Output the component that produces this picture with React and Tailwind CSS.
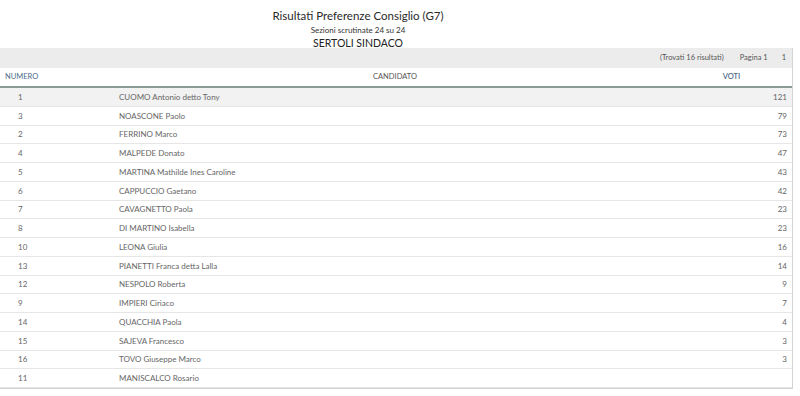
const rows = [
  ['1', 'CUOMO Antonio detto Tony', '121'],
  ['3', 'NOASCONE Paolo', '79'],
  ['2', 'FERRINO Marco', '73'],
  ['4', 'MALPEDE Donato', '47'],
  ['5', 'MARTINA Mathilde Ines Caroline', '43'],
  ['6', 'CAPPUCCIO Gaetano', '42'],
  ['7', 'CAVAGNETTO Paola', '23'],
  ['8', 'DI MARTINO Isabella', '23'],
  ['10', 'LEONA Giulia', '16'],
  ['13', 'PIANETTI Franca detta Lalla', '14'],
  ['12', 'NESPOLO Roberta', '9'],
  ['9', 'IMPIERI Ciriaco', '7'],
  ['14', 'QUACCHIA Paola', '4'],
  ['15', 'SAJEVA Francesco', '3'],
  ['16', 'TOVO Giuseppe Marco', '3'],
  ['11', 'MANISCALCO Rosario', ''],
]

export default function App() {
  return (
    <div className="w-[800px] h-[396px] bg-white overflow-hidden font-['Lato',sans-serif] text-[#333]">
      {/* intestazione */}
      <div className="flex flex-col items-center pt-[8px] w-[716px]">
        <div className="text-[11.5px] leading-[16px] text-[#2a2a2a]">Risultati Preferenze Consiglio (G7)</div>
        <div className="text-[8px] leading-[12px] text-[#333]">Sezioni scrutinate 24 su 24</div>
        <div className="text-[10.5px] leading-[14px] text-[#222]">SERTOLI SINDACO</div>
      </div>

      <div className="w-[793px] mt-[-2px] border-r border-b border-[#d4d4d4]">
        <div className="h-[20px] bg-[#ececec] flex items-center justify-end gap-[16px] pr-[6px] text-[7.5px] text-[#555]">
          <span>(Trovati 16 risultati)</span>
          <span className="flex gap-[14px]"><span>Pagina 1</span><span>1</span></span>
        </div>

        <div className="h-[20px] flex items-center text-[7.5px] text-[#4a6a8a] border-b-2 border-[#8a9a96]">
          <div className="w-[119px] pl-[5px]">NUMERO</div>
          <div className="w-[552px] text-center text-[#555]">CANDIDATO</div>
          <div className="flex-1 text-center text-[#4a6a8a] font-semibold">VOTI</div>
        </div>

        {rows.map((r, i) => (
          <div
            key={i}
            className={`h-[18.75px] flex items-center text-[8px] text-[#666] border-b border-[#e6e6e6] ${i === 0 ? 'bg-[#f2f2f2]' : 'bg-white'}`}
          >
            <div className="w-[119px] pl-[18px]">{r[0]}</div>
            <div className="flex-1">{r[1]}</div>
            <div className="w-[60px] text-right pr-[5px]">{r[2]}</div>
          </div>
        ))}
      </div>
    </div>
  )
}
